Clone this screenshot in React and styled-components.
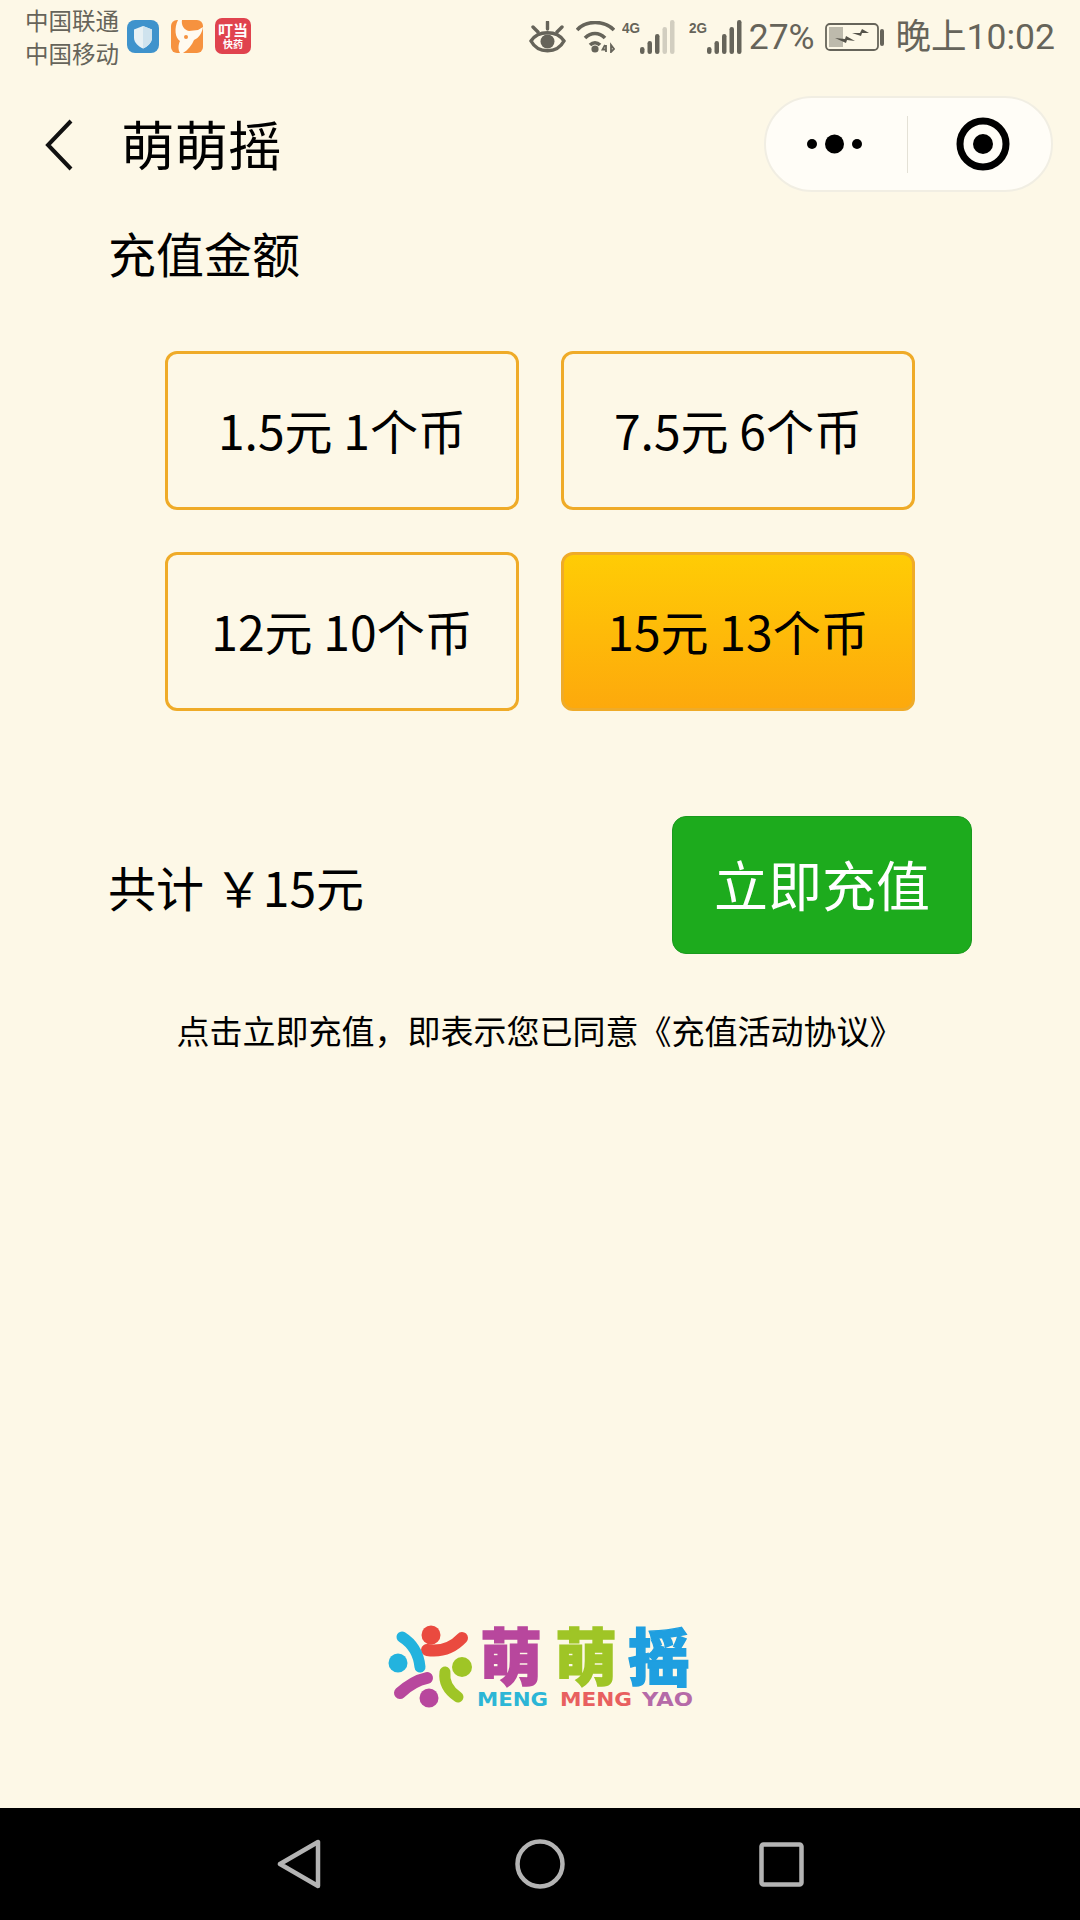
import React from 'react'
import styled, { createGlobalStyle } from 'styled-components'

const CJK = '"Noto Sans CJK SC", "Noto Sans", sans-serif'
const GREY = '#66645a'

const GlobalStyle = createGlobalStyle`
  html, body {
    margin: 0;
    padding: 0;
    background: #fdf8e7;
  }
  * {
    box-sizing: border-box;
  }
`

const Page = styled.div`
  width: 1080px;
  height: 1920px;
  display: flex;
  flex-direction: column;
  background: #fdf8e7;
  font-family: ${CJK};
  color: #000;
  overflow: hidden;
`

const StatusBar = styled.div`
  height: 70px;
  padding: 4px 25px 0 25px;
  display: flex;
  align-items: flex-start;
  justify-content: space-between;
  color: ${GREY};
`

const StatusLeft = styled.div`
  display: flex;
  align-items: center;
  gap: 7px;
`

const Carrier = styled.div`
  width: 95px;
  font-size: 23.5px;
  line-height: 33px;
  white-space: nowrap;
`

const AppIcons = styled.div`
  display: flex;
  align-items: center;
  gap: 12px;
  margin-top: -2px;
`

const StatusRight = styled.div`
  display: flex;
  align-items: center;
  height: 66px;
  gap: 10.5px;
`

const StatusText = styled.span`
  font-family: "Roboto", ${CJK};
  font-size: 35.5px;
  line-height: 40px;
  white-space: nowrap;
`

const DangIcon = styled.div`
  width: 36px;
  height: 36px;
  border-radius: 7px;
  background: #e0434e;
  color: #fff;
  display: flex;
  flex-direction: column;
  align-items: center;
  justify-content: center;
  font-weight: 700;
  font-size: 15px;
  line-height: 16px;
`

const DangSub = styled.span`
  display: block;
  font-size: 10px;
  line-height: 12px;
`

const NavBar = styled.div`
  height: 121px;
  padding: 26px 27px 0 45px;
  display: flex;
  align-items: flex-start;
`

const BackButton = styled.div`
  width: 76px;
  padding-top: 23px;
  line-height: 0;
`

const NavTitle = styled.div`
  flex: 1;
  font-size: 53.5px;
  line-height: 72px;
  margin-top: 11px;
`

const Capsule = styled.div`
  width: 289px;
  height: 96px;
  border-radius: 48px;
  border: 2px solid #f1eee3;
  background: #fffdf7;
  display: flex;
  align-items: center;
`

const CapsuleCell = styled.div`
  flex: 1;
  display: flex;
  align-items: center;
  justify-content: center;
  padding-left: ${(p) => p.$left || 0}px;
  padding-right: ${(p) => p.$right || 0}px;
  line-height: 0;
`

const CapsuleDivider = styled.div`
  width: 1px;
  height: 57px;
  background: #e4e1d6;
`

const Content = styled.div`
  flex: 1;
  padding: 0 108px;
  display: flex;
  flex-direction: column;
`

const SectionTitle = styled.div`
  font-size: 48px;
  line-height: 64px;
  margin-top: 29px;
`

const OptionGrid = styled.div`
  margin: 67px 0 0 57px;
  width: 750px;
  display: grid;
  grid-template-columns: 354px 354px;
  grid-auto-rows: 159px;
  gap: 42px;
`

const Option = styled.div`
  border-radius: 12px;
  border: 3px solid #efab28;
  background: ${(p) => (p.$active ? 'linear-gradient(180deg, #ffcc05 0%, #fda90c 100%)' : 'transparent')};
  display: flex;
  align-items: center;
  justify-content: center;
  padding-bottom: 3px;
  font-size: 48px;
  line-height: 60px;
  white-space: nowrap;
`

const TotalRow = styled.div`
  margin-top: 105px;
  display: flex;
  align-items: center;
  justify-content: space-between;
`

const Total = styled.div`
  font-size: 48px;
  line-height: 64px;
  margin-top: 2px;
  white-space: pre;
`

const PayButton = styled.div`
  width: 300px;
  height: 138px;
  border-radius: 14px;
  background: #1dab1d;
  border: 1px solid #1a9a1e;
  color: #fff;
  font-size: 54px;
  line-height: 70px;
  padding-bottom: 2px;
  display: flex;
  align-items: center;
  justify-content: center;
`

const Agreement = styled.div`
  margin-top: 54px;
  margin-left: -1px;
  font-size: 33px;
  line-height: 44px;
  text-align: center;
  white-space: nowrap;
`

const LogoWrap = styled.div`
  margin-top: auto;
  margin-bottom: 99px;
  margin-left: 280px;
  line-height: 0;
`

const LogoSvg = styled.svg`
  overflow: visible;
`

const BottomBar = styled.div`
  height: 112px;
  background: #000;
  display: flex;
  align-items: center;
  justify-content: center;
  gap: 194px;
  line-height: 0;
`

const SignalSvg = styled.svg`
  margin-left: ${(p) => p.$shift || 0}px;
  margin-right: ${(p) => -(p.$shift || 0)}px;
`

const WifiSvg = styled.svg`
  margin-right: -4px;
`

const Shield = () => (
  <svg width="32" height="33" viewBox="0 0 32 33">
    <rect width="32" height="33" rx="8" fill="#3f93cc" />
    <path d="M16 6l9 3.5v8c0 5.500-4.500 9-9 11-4.500-2-9-5.500-9-11v-8z" fill="#e8f1f4" />
    <path d="M16 6l9 3.500v8c0 5.500-4.500 9-9 11z" fill="#cfe3ee" />
  </svg>
)

const Kangaroo = () => (
  <svg width="32" height="33" viewBox="0 0 32 33">
    <rect width="32" height="33" rx="6" fill="#f6923f" />
    <path d="M7 0h4c-1 5 2 10 7 11l9-1 5-3c-1 6-4 11-9 13-2 5-6 10-11 13H9c-2-3-2-8 0-12C4 18 3 8 7 0z" fill="#fffaf0" />
    <circle cx="15" cy="17" r="2" fill="#f6923f" />
  </svg>
)

const Eye = () => (
  <svg width="37" height="32" viewBox="0 0 37 32" fill="none" stroke={GREY} strokeWidth="3.4">
    <path d="M2 20C9 9 28 9 35 20C28 33 9 33 2 20z" />
    <circle cx="18.500" cy="20.500" r="7" fill={GREY} stroke="none" />
    <path d="M18.500 8V1M9 11L4 6M28 11l5-5" strokeLinecap="round" />
  </svg>
)

const Wifi = () => (
  <WifiSvg width="39" height="32" viewBox="0 0 39 32" fill="none" stroke={GREY} strokeWidth="3.600">
    <path d="M1 9C10-1 28-1 38 9M9 17c6-6 14-6 20 0M14 24c3-3 7-3 10 0" />
    <circle cx="19" cy="28" r="3.600" fill={GREY} stroke="none" />
    <path d="M29 24l-2.500 4.500h4M30 24v7M35 24v7l3-3z" strokeWidth="1.800" />
  </WifiSvg>
)

const BARS = [
  { x: 18, h: 7 },
  { x: 25.5, h: 13 },
  { x: 33, h: 20 },
  { x: 40.5, h: 27 },
  { x: 48, h: 34 },
]

// lit = how many bars are dark, the rest stay pale
const Signal = ({ label, lit, shift }) => (
  <SignalSvg width="53" height="34" viewBox="0 0 53 34" $shift={shift}>
    <text x="0" y="13" fontFamily='"Liberation Sans", sans-serif' fontSize="15" fontWeight="700" fill={GREY} textLength="18" lengthAdjust="spacingAndGlyphs">{label}</text>
    {BARS.map((b, i) => (
      <rect key={b.x} x={b.x} y={34 - b.h} width="4.500" height={b.h} rx="2.200" fill={i < lit ? GREY : '#d2cec0'} />
    ))}
  </SignalSvg>
)

const Battery = () => (
  <svg width="60" height="28" viewBox="0 0 60 28">
    <rect x="1" y="1" width="52" height="26" rx="4" fill="none" stroke={GREY} strokeWidth="1.800" />
    <rect x="4" y="4" width="14" height="20" fill="#bdbaac" />
    <path d="M10 15l10 1 1-3 9 5-8-1-1 3zM27 10l8 0 2-4 7 4-7 0-1 3z" fill="#55534a" />
    <rect x="55" y="6" width="4" height="17" rx="2" fill={GREY} />
  </svg>
)

const LOGO_HAN = { fontFamily: CJK, fontSize: 62, fontWeight: 900, strokeWidth: 1.5 }
const LOGO_LATIN = { fontFamily: '"DejaVu Sans", sans-serif', fontSize: 19, fontWeight: 700, lengthAdjust: 'spacingAndGlyphs' }

const Logo = () => (
  <LogoSvg width="310" height="84" viewBox="0 0 310 84" fill="none" strokeLinecap="round">
    <circle cx="43" cy="10" r="9.500" fill="#ea4a3f" />
    <path d="M39 25Q60 28 74 13" stroke="#ea4a3f" strokeWidth="12" />
    <circle cx="10" cy="38" r="9.500" fill="#23b3de" />
    <path d="M14 12Q30 22 32 42" stroke="#23b3de" strokeWidth="11" />
    <circle cx="74" cy="42" r="10" fill="#9fc526" />
    <path d="M57 47Q55 62 70 72" stroke="#9fc526" strokeWidth="11" />
    <circle cx="41" cy="73" r="9.500" fill="#b8479d" />
    <path d="M12 68Q25 56 39 53" stroke="#b8479d" strokeWidth="12" />
    <text x="92" y="56" fill="#b8479d" stroke="#b8479d" {...LOGO_HAN}>萌</text>
    <text x="167" y="56" fill="#9fc526" stroke="#9fc526" {...LOGO_HAN}>萌</text>
    <text x="240" y="56" fill="#1f9fe0" stroke="#1f9fe0" {...LOGO_HAN}>摇</text>
    <text x="89" y="81" fill="#2cb6d6" textLength="71" {...LOGO_LATIN}>MENG</text>
    <text x="172" y="81" fill="#e8605f" textLength="72" {...LOGO_LATIN}>MENG</text>
    <text x="254" y="81" fill="#b56aa8" textLength="51" {...LOGO_LATIN}>YAO</text>
  </LogoSvg>
)

export default function App() {
  return (
    <Page>
      <GlobalStyle />
      <StatusBar>
        <StatusLeft>
          <Carrier>中国联通<br />中国移动</Carrier>
          <AppIcons>
            <Shield />
            <Kangaroo />
            <DangIcon>叮当<DangSub>快药</DangSub></DangIcon>
          </AppIcons>
        </StatusLeft>
        <StatusRight>
          <Eye />
          <Wifi />
          <Signal label="4G" lit={3} />
          <Signal label="2G" lit={5} shift={4} />
          <StatusText>27%</StatusText>
          <Battery />
          <StatusText>晚上10:02</StatusText>
        </StatusRight>
      </StatusBar>
      <NavBar>
        <BackButton>
          <svg width="28" height="52" viewBox="0 0 28 52" fill="none" stroke="#111" strokeWidth="4">
            <path d="M26 2L3 26l23 24" />
          </svg>
        </BackButton>
        <NavTitle>萌萌摇</NavTitle>
        <Capsule>
          <CapsuleCell $right={4}>
            <svg width="55" height="20" viewBox="0 0 55 20" fill="#000">
              <circle cx="5" cy="10" r="5" />
              <circle cx="27.500" cy="10" r="9.500" />
              <circle cx="50" cy="10" r="5" />
            </svg>
          </CapsuleCell>
          <CapsuleDivider />
          <CapsuleCell $left={6}>
            <svg width="54" height="54" viewBox="0 0 54 54">
              <circle cx="27" cy="27" r="23" fill="none" stroke="#000" strokeWidth="7" />
              <circle cx="27" cy="27" r="10" fill="#000" />
            </svg>
          </CapsuleCell>
        </Capsule>
      </NavBar>
      <Content>
        <SectionTitle>充值金额</SectionTitle>
        <OptionGrid>
          <Option>1.5元 1个币</Option>
          <Option>7.5元 6个币</Option>
          <Option>12元 10个币</Option>
          <Option $active>15元 13个币</Option>
        </OptionGrid>
        <TotalRow>
          <Total>共计 ￥15元</Total>
          <PayButton>立即充值</PayButton>
        </TotalRow>
        <Agreement>点击立即充值，即表示您已同意《充值活动协议》</Agreement>
        <LogoWrap>
          <Logo />
        </LogoWrap>
      </Content>
      <BottomBar>
        <svg width="44" height="50" viewBox="0 0 44 50" fill="none" stroke="#b4b4b4" strokeWidth="4.500" strokeLinejoin="round">
          <path d="M41 3v44L3 25z" />
        </svg>
        <svg width="50" height="50" viewBox="0 0 50 50" fill="none" stroke="#b4b4b4" strokeWidth="4.500">
          <circle cx="25" cy="25" r="22.500" />
        </svg>
        <svg width="45" height="45" viewBox="0 0 45 45" fill="none" stroke="#b4b4b4" strokeWidth="4.500" strokeLinejoin="round">
          <rect x="2.500" y="2.500" width="40" height="40" rx="2" />
        </svg>
      </BottomBar>
    </Page>
  )
}
